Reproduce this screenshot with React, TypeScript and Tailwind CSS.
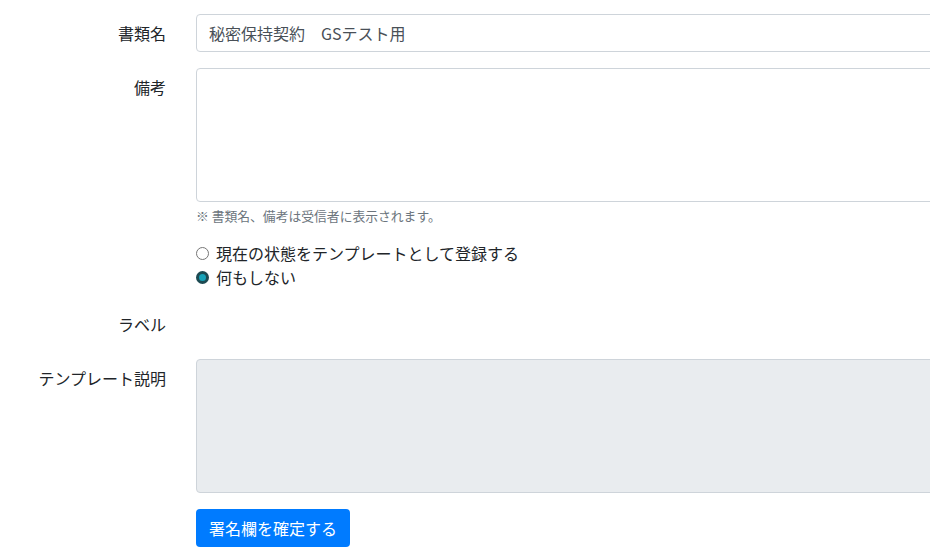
import React from 'react';

const font = { fontFamily: '"Noto Sans CJK JP", "Noto Sans", sans-serif' };

function Row({ label, children }: { label: string; children?: React.ReactNode }) {
  return (
    <div className="flex gap-[30px] mb-4">
      <label className="w-[166px] flex-none text-right pt-[7px] leading-6 text-[16px] text-[#212529]">
        {label}
      </label>
      <div className="flex-none w-[800px] min-h-[38px]">{children}</div>
    </div>
  );
}

function Radio({ checked, label }: { checked?: boolean; label: string }) {
  return (
    <div className="flex items-center h-6 gap-[7px]">
      {checked ? (
        <span className="w-[13px] h-[13px] rounded-full border-[3px] border-[#1d4a52] bg-[#17a2b8]" />
      ) : (
        <span className="w-[13px] h-[13px] rounded-full border border-[#767676] bg-white" />
      )}
      <span className="text-[16px] text-[#212529] leading-6">{label}</span>
    </div>
  );
}

export default function App() {
  return (
    <div className="w-full h-[550px] overflow-hidden bg-white pt-[14px]" style={font}>
      <Row label="書類名">
        <div className="h-[38px] border border-[#ced4da] rounded-[4px] px-3 flex items-center text-[16px] text-[#495057]">
          秘密保持契約　GSテスト用
        </div>
      </Row>

      <div className="flex gap-[30px] mb-4">
        <label className="w-[166px] flex-none text-right pt-[7px] leading-6 text-[16px] text-[#212529]">
          備考
        </label>
        <div className="flex-none w-[800px]">
          <div className="h-[134px] border border-[#ced4da] rounded-[4px]" />
          <p className="mt-1 text-[12.8px] leading-[19px] text-[#6c757d]">※ 書類名、備考は受信者に表示されます。</p>
        </div>
      </div>

      <div className="flex gap-[30px] mb-4">
        <div className="w-[166px] flex-none" />
        <div className="flex-none">
          <Radio label="現在の状態をテンプレートとして登録する" />
          <Radio checked label="何もしない" />
        </div>
      </div>

      <Row label="ラベル" />

      <Row label="テンプレート説明">
        <div className="h-[134px] border border-[#ced4da] rounded-[4px] bg-[#e9ecef]" />
      </Row>

      <div className="flex gap-[30px]">
        <div className="w-[166px] flex-none" />
        <button className="h-[38px] px-[13px] rounded-[4px] bg-[#007bff] text-white text-[16px] leading-6">
          署名欄を確定する
        </button>
      </div>
    </div>
  );
}
